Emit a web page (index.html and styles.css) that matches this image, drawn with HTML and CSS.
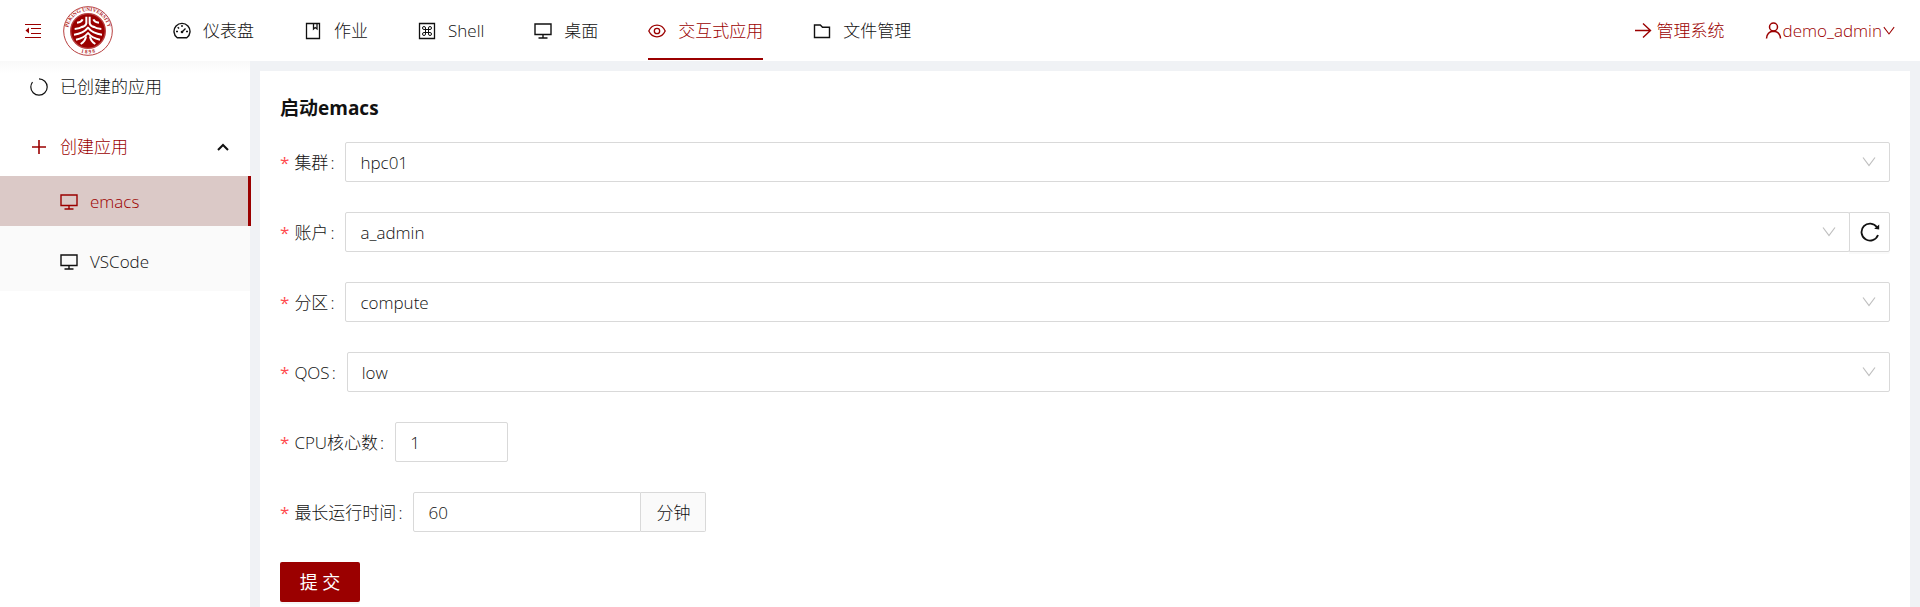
FILE: index.html
```html
<!DOCTYPE html>
<html lang="zh-CN">
<head>
<meta charset="utf-8">
<meta name="viewport" content="width=device-width, initial-scale=1">
<title>启动emacs</title>
<link rel="stylesheet" href="styles.css">
</head>
<body>
<svg class="sprite" aria-hidden="true">
  <symbol id="i-desktop" viewBox="0 0 18 18"><path d="M1 2h16v10.500H1zM9 12.500V16M4.500 16h9" fill="none" stroke="currentColor" stroke-width="1.400"/></symbol>
  <symbol id="i-down" viewBox="0 0 14 14"><path d="M1 2.500l6 8 6-8" fill="none" stroke="currentColor" stroke-width="1.200"/></symbol>
</svg>
<header class="header">
  <button class="fold" type="button" aria-label="收起菜单">
    <svg viewBox="0 0 16 16" width="16" height="16"><path d="M0 1.500h16M6 5.500h10M6 10.500h10M0 14.500h16" stroke="currentColor" stroke-width="1.200"/><path d="M4 4.500v6L.5 7.500z" fill="currentColor"/></svg>
  </button>
  <a class="logo" href="#" aria-label="PEKING UNIVERSITY">
    <svg viewBox="0 0 150 150" width="50" height="50">
      <defs>
        <path id="ringTop" d="M22 103A60 60 0 1 1 128 103"/>
        <path id="ringBottom" d="M40 133A68 68 0 0 0 110 133"/>
      </defs>
      <circle cx="75" cy="75" r="73" fill="#fff" stroke="#b84040" stroke-width="3"/>
      <text class="seal-text"><textPath href="#ringTop" startOffset="50%" text-anchor="middle">PEKING UNIVERSITY</textPath></text>
      <text class="seal-text"><textPath href="#ringBottom" startOffset="50%" text-anchor="middle">1 8 9 8</textPath></text>
      <circle cx="75" cy="75" r="52" fill="#9b0000" stroke="#b84040" stroke-width="4"/>
      <g fill="none" stroke="#fff" stroke-width="6" stroke-linejoin="round">
        <path d="M70 32v20q-2 9-15 12M80 32v20q2 9 15 12"/>
        <path d="M59 40q-4 9-17 10M91 40q4 9 17 10"/>
        <path d="M60 61q-9 7-25 8M90 61q9 7 25 8"/>
        <path d="M33 86q28-3 42-21 14 18 42 21"/>
        <path d="M39 101q24-5 36-20 12 15 36 20"/>
        <path d="M53 114q14-8 16-23M97 114q-14-8-16-23"/>
      </g>
    </svg>
  </a>
  <nav class="nav" aria-label="主导航">
    <a href="#"><svg class="icon" viewBox="0 0 18 18"><g fill="none" stroke="currentColor" stroke-width="1.400"><path d="M4.200 15.800A8 8 0 1 1 13.800 15.800z" stroke-linejoin="round"/><path d="M9 10l3.500-3.500M9 3v2M3 9.500h2M13 9.500h2M4.700 5.200l1.400 1.400"/></g><circle cx="9" cy="10" r="1.300" fill="currentColor"/></svg>仪表盘</a>
    <a href="#"><svg class="icon" viewBox="0 0 18 18"><path d="M2.500 1.500h13v15h-13zM9.500 1.500v5.500l1.700-1.400L13 7v-5.500" fill="none" stroke="currentColor" stroke-width="1.300"/></svg>作业</a>
    <a href="#"><svg class="icon" viewBox="0 0 18 18"><g fill="none" stroke="currentColor"><path d="M1.500 1.500h15v15h-15z" stroke-width="1.300"/><path d="M7.500 7.500H6A1.500 1.500 0 1 1 7.500 6v6A1.500 1.500 0 1 1 6 10.500h6A1.500 1.500 0 1 1 10.500 12V6A1.500 1.500 0 1 1 12 7.500z" stroke-width="1"/></g></svg>Shell</a>
    <a href="#"><svg class="icon"><use href="#i-desktop"/></svg>桌面</a>
    <a class="active" href="#" aria-current="page"><svg class="icon" viewBox="0 0 18 18"><g fill="none" stroke="currentColor" stroke-width="1.300"><path d="M.8 9Q3.500 3.200 9 3.200T17.200 9Q14.500 14.800 9 14.800T.8 9z"/><circle cx="9" cy="9" r="2.700"/></g></svg>交互式应用</a>
    <a href="#"><svg class="icon" viewBox="0 0 18 18"><path d="M1.500 3h5.800l2.200 2.300h7V15.500h-15z" fill="none" stroke="currentColor" stroke-width="1.400"/></svg>文件管理</a>
  </nav>
  <a class="manage" href="#"><svg viewBox="0 0 17 17" width="17" height="17"><path d="M0 8.500h15M8 1.500l7.500 7L8 15.500" fill="none" stroke="currentColor" stroke-width="1.400"/></svg>管理系统</a>
  <button class="user" type="button"><svg viewBox="0 0 17 17" width="17" height="17"><g fill="none" stroke="currentColor" stroke-width="1.500"><circle cx="8.500" cy="5" r="4"/><path d="M1.500 16.500Q2 9.500 8.500 9.200 15 9.500 15.500 16.500"/></g></svg>demo_admin<svg width="12" height="12"><use href="#i-down"/></svg></button>
</header>
<div class="layout">
  <aside class="sidebar">
    <a class="item" href="#"><svg class="icon" viewBox="0 0 18 18"><path d="M9 .8A8.200 8.200 0 1 1 .8 9Q.8 6.500 2.500 4" fill="none" stroke="currentColor" stroke-width="1.200"/></svg>已创建的应用</a>
    <button class="item parent" type="button" aria-expanded="true"><svg class="icon" viewBox="0 0 18 18"><path d="M2 9h14M9 2v14" stroke="currentColor" stroke-width="1.600"/></svg>创建应用<svg class="chevron" viewBox="0 0 12 8" width="12" height="8"><path d="M1 7l5-5 5 5" fill="none" stroke="currentColor" stroke-width="2"/></svg></button>
    <div class="submenu">
      <a class="item selected" href="#" aria-current="page"><svg class="icon"><use href="#i-desktop"/></svg>emacs</a>
      <a class="item" href="#"><svg class="icon"><use href="#i-desktop"/></svg>VSCode</a>
    </div>
  </aside>
  <main class="content">
    <form class="card">
      <h1>启动emacs</h1>
      <div class="row">
        <label for="cluster">集群</label>
        <span class="select"><select id="cluster" required><option>hpc01</option></select><svg width="14" height="14"><use href="#i-down"/></svg></span>
      </div>
      <div class="row">
        <label for="account">账户</label>
        <span class="select"><select id="account" required><option>a_admin</option></select><svg width="14" height="14"><use href="#i-down"/></svg></span>
        <button class="reload" type="button" aria-label="刷新"><svg viewBox="0 0 20 20" width="20" height="20"><path d="M18 13A8.500 8.500 0 1 1 17 5.200" fill="none" stroke="currentColor" stroke-width="1.800"/><path d="M19.200 2.500v5l-5-.8z" fill="currentColor"/></svg></button>
      </div>
      <div class="row">
        <label for="partition">分区</label>
        <span class="select"><select id="partition" required><option>compute</option></select><svg width="14" height="14"><use href="#i-down"/></svg></span>
      </div>
      <div class="row">
        <label for="qos">QOS</label>
        <span class="select"><select id="qos" required><option>low</option></select><svg width="14" height="14"><use href="#i-down"/></svg></span>
      </div>
      <div class="row">
        <label for="cores">CPU核心数</label>
        <input class="cores" id="cores" type="text" inputmode="numeric" value="1" required>
      </div>
      <div class="row">
        <label for="time">最长运行时间</label>
        <input class="time" id="time" type="text" inputmode="numeric" value="60" required><span class="addon">分钟</span>
      </div>
      <button class="submit" type="submit">提 交</button>
    </form>
  </main>
</div>
</body>
</html>
```
FILE: styles.css
```css
:root {
  --primary: #9b0000;
  --text: #111;
  --border: #d9d9d9;
}
* { box-sizing: border-box; }
body {
  margin: 0;
  min-height: 100vh;
  display: flex;
  flex-direction: column;
  background: #f0f2f5;
  color: var(--text);
  font: 300 17px/26px "Open Sans", "Noto Sans CJK SC", sans-serif;
}
a { color: inherit; text-decoration: none; }
button, input, select { font: inherit; color: inherit; }
button { border: 0; background: none; padding: 0; cursor: pointer; }
svg { flex: none; display: block; }
.sprite { position: absolute; width: 0; height: 0; }
.icon { width: 18px; height: 18px; }

.header {
  position: relative;
  z-index: 1;
  height: 61px;
  display: flex;
  align-items: center;
  padding: 0 25px;
  background: #fff;
}
.fold { color: var(--primary); margin-right: 22px; }
.logo { margin-right: 60px; }
.seal-text { font: 700 16px "Liberation Serif", serif; fill: #b02a2a; }
.nav { flex: 1; display: flex; gap: 50px; align-self: stretch; }
.nav a {
  display: flex;
  align-items: center;
  gap: 12px;
  padding-top: 4px;
  border-bottom: 2px solid transparent;
  margin-bottom: 1px;
}
.nav .active { color: var(--primary); border-bottom-color: var(--primary); }
.manage, .user { display: flex; align-items: center; color: var(--primary); }
.manage { gap: 5px; margin-right: 40px; }
.user { gap: 1px; }

.layout { flex: 1; display: flex; }
.sidebar {
  width: 250px;
  flex: none;
  background: linear-gradient(#f9f9f9, #fff 12px);
}
.item {
  width: 100%;
  height: 50px;
  display: flex;
  align-items: center;
  gap: 12px;
  padding: 1px 21px 0 30px;
  margin-bottom: 10px;
}
.parent { color: var(--primary); margin-bottom: 5px; }
.chevron { margin-left: auto; color: var(--text); }
.submenu { background: #fafafa; padding-bottom: 5px; }
.submenu .item { padding-left: 60px; }
.submenu .item:last-child { margin-bottom: 0; }
.submenu .selected {
  width: calc(100% + 1px);
  background: #dbc9c7;
  color: var(--primary);
  border-right: 3px solid var(--primary);
}

.content { flex: 1; display: flex; min-width: 0; padding: 10px 10px 0; }
.card { flex: 1; min-width: 0; background: #fff; padding: 22px 20px 5px; }
h1 { margin: 0 0 19px; font-size: 19px; line-height: 30px; font-weight: 700; }
.row { display: flex; align-items: center; margin-bottom: 30px; }
.row label { flex: none; margin-right: 10px; padding-top: 1px; }
.row label::before { content: "*"; color: #ff4d4f; margin-right: 5px; font-weight: 400; }
.row label::after { content: ":"; margin: 0 1px 0 2px; }
.select { position: relative; flex: 1; min-width: 0; }
.select select, .row input {
  display: block;
  height: 40px;
  padding: 1px 14px 0;
  border: 1px solid var(--border);
  border-radius: 2px;
  background: #fff;
}
.select select { width: 100%; appearance: none; }
.select svg {
  position: absolute;
  right: 14px;
  top: 13px;
  color: #bfbfbf;
  pointer-events: none;
}
.reload {
  width: 41px;
  height: 40px;
  margin-left: -1px;
  display: grid;
  place-items: center;
  border: 1px solid var(--border);
  border-radius: 0 2px 2px 0;
  box-shadow: 0 2px 0 rgba(0, 0, 0, .02);
}
.row .cores { width: 113px; }
.row .time { width: 228px; border-radius: 2px 0 0 2px; }
.addon {
  height: 40px;
  line-height: 38px;
  padding: 1px 15px 0;
  border: 1px solid var(--border);
  border-left: 0;
  border-radius: 0 2px 2px 0;
  background: #fafafa;
}
.submit {
  display: block;
  width: 80px;
  height: 40px;
  border-radius: 2px;
  background: var(--primary);
  color: #fff;
  font-size: 18px;
  font-weight: 400;
  box-shadow: 0 2px 0 rgba(0, 0, 0, .04);
}
```
